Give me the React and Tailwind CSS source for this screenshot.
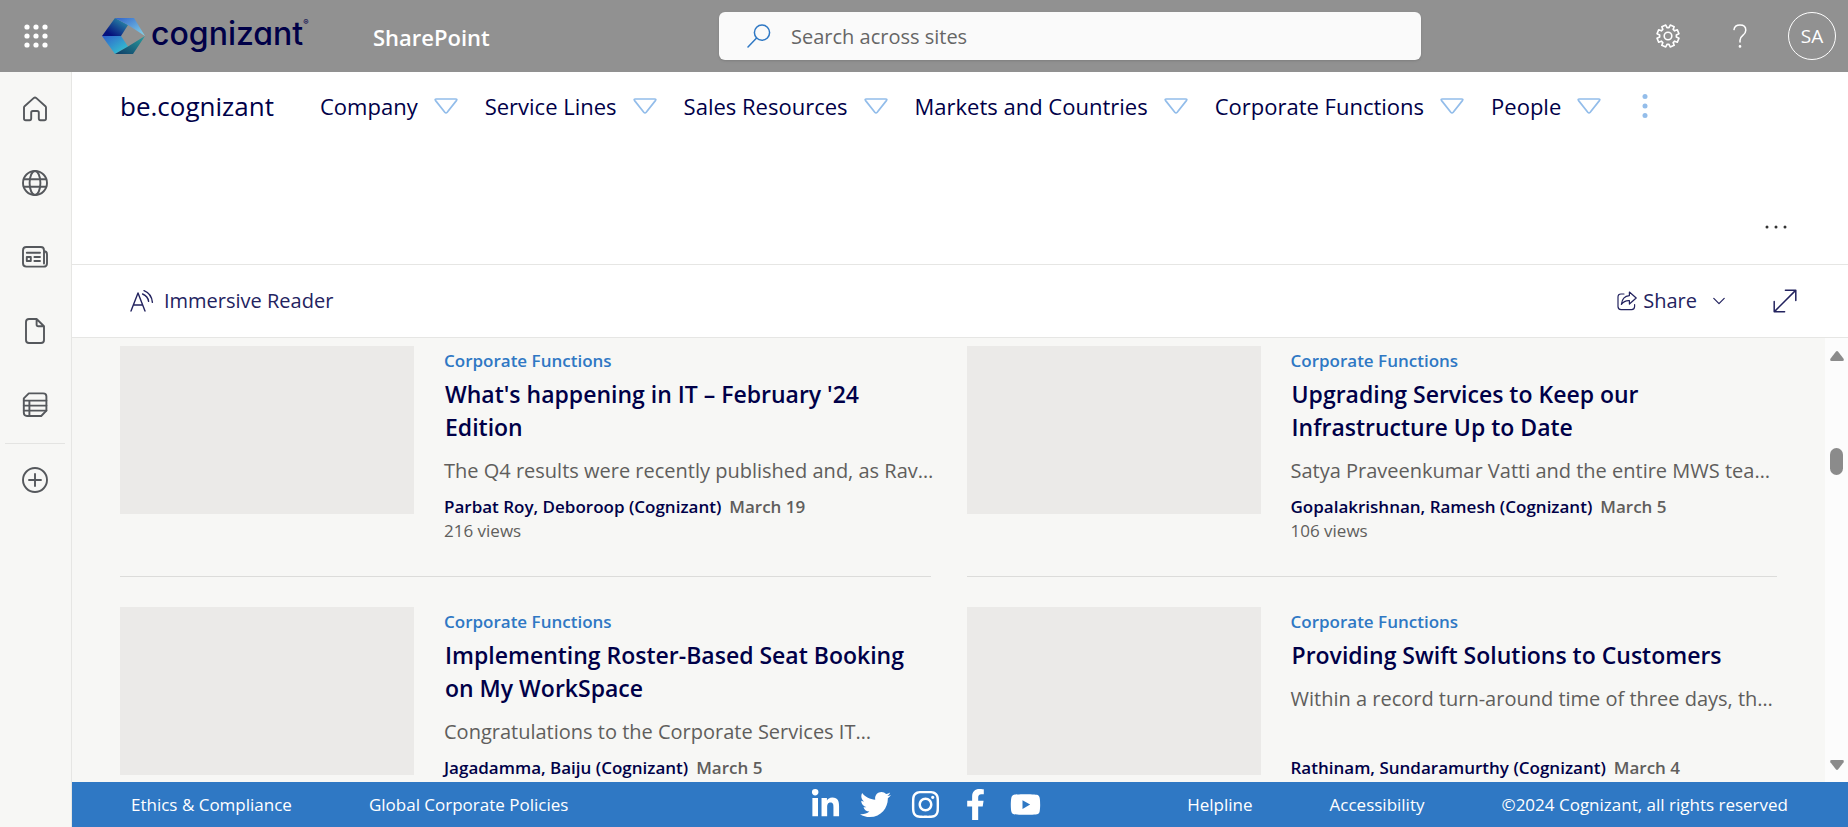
import React from "react";
import { FaFacebookF, FaInstagram, FaLinkedinIn, FaTwitter, FaYoutube } from "react-icons/fa";

const NAV = ["Company", "Service Lines", "Sales Resources", "Markets and Countries", "Corporate Functions", "People"];

const NEWS = [
  {
    title: "What's happening in IT – February '24 Edition",
    excerpt: "The Q4 results were recently published and, as Rav…",
    author: "Parbat Roy, Deboroop (Cognizant)",
    date: "March 19",
    views: "216 views",
  },
  {
    title: "Upgrading Services to Keep our Infrastructure Up to Date",
    excerpt: "Satya Praveenkumar Vatti and the entire MWS tea…",
    author: "Gopalakrishnan, Ramesh (Cognizant)",
    date: "March 5",
    views: "106 views",
  },
  {
    title: "Implementing Roster-Based Seat Booking on My WorkSpace",
    excerpt: "Congratulations to the Corporate Services IT…",
    author: "Jagadamma, Baiju (Cognizant)",
    date: "March 5",
  },
  {
    title: "Providing Swift Solutions to Customers",
    excerpt: "Within a record turn-around time of three days, th…",
    author: "Rathinam, Sundaramurthy (Cognizant)",
    date: "March 4",
  },
];

function Icon({ className, box = 26, width = 1.9, children }) {
  return (
    <svg
      viewBox={`0 0 ${box} ${box}`}
      className={className}
      fill="none"
      stroke="currentColor"
      strokeWidth={width}
      strokeLinecap="round"
      strokeLinejoin="round"
      aria-hidden="true"
    >
      {children}
    </svg>
  );
}

const RAIL = [
  {
    label: "Home",
    art: <path d="M2 11.6 Q2 10.8 2.6 10.2 L11.9 1.9 Q13 1 14.1 1.9 L23.4 10.2 Q24 10.8 24 11.6 V22.4 Q24 24.2 22.2 24.2 H18.4 Q16.8 24.2 16.8 22.6 V16.6 Q16.8 15 15.2 15 H10.8 Q9.2 15 9.2 16.6 V22.6 Q9.2 24.2 7.6 24.2 H3.8 Q2 24.2 2 22.4 Z" />,
  },
  {
    label: "My sites",
    art: (
      <>
        <circle cx="13" cy="13" r="12" />
        <ellipse cx="13" cy="13" rx="5.4" ry="12" />
        <path d="M1.8 9.2H24.2M1.8 16.8H24.2" />
      </>
    ),
  },
  {
    label: "My news",
    art: (
      <>
        <path d="M22 7.2V19.6M22 7.2Q25 7.2 25 10.4V19.4Q25 22.6 21.6 22.6H4.4Q1 22.6 1 19.2V6.4Q1 3 4.4 3H18.8Q22 3 22 6.4V7.2" />
        <path d="M4.8 8.8H18M12.4 13H18M12.4 17H18M4.8 13H8.8V17H4.8Z" />
      </>
    ),
  },
  {
    label: "My files",
    art: <path d="M14.6 1H7Q4 1 4 4V22Q4 25 7 25H19Q22 25 22 22V8.2L14.6 1V6.4Q14.6 8.2 16.4 8.2H22" />,
  },
  {
    label: "My lists",
    art: (
      <>
        <path d="M6.8 1.4H21.2Q24.4 1.4 24.4 4.6V18.6L19.2 24H5Q1.8 24 1.8 20.8V6.4Z" />
        <path d="M1.8 8.6H24.4M1.8 13.6H24.4M1.8 18.6H24.4M7.4 8.6V24" />
      </>
    ),
  },
];

function Hexagon() {
  return (
    <svg viewBox="0 0 43 36" className="h-9 w-[43px] shrink-0" aria-hidden="true">
      <defs>
        <linearGradient id="g1" x1="0" y1="1" x2="1" y2="0">
          <stop offset="0.2" stopColor="#05107c" />
          <stop offset="1" stopColor="#2f9fb0" />
        </linearGradient>
        <linearGradient id="g2" x1="0" y1="0" x2="1" y2="1">
          <stop offset="0" stopColor="#2f62c9" />
          <stop offset="1" stopColor="#86d6ea" />
        </linearGradient>
        <linearGradient id="g3" x1="0" y1="0" x2="1" y2="1">
          <stop offset="0" stopColor="#2f5fcb" />
          <stop offset="1" stopColor="#34cfd0" />
        </linearGradient>
        <linearGradient id="g4" x1="0" y1="1" x2="1" y2="0">
          <stop offset="0" stopColor="#0d3b66" />
          <stop offset="1" stopColor="#2b9f9f" />
        </linearGradient>
      </defs>
      <path d="M13 0L26 7L19 18H0Z" fill="url(#g1)" />
      <path d="M13 0H32L43 18L26 7Z" fill="url(#g2)" />
      <path d="M0 18H19L26 28.5L13 36Z" fill="url(#g3)" />
      <path d="M43 18L31 36H13L26 28.5Z" fill="url(#g4)" />
    </svg>
  );
}

const gearPath = (() => {
  const pts = [];
  for (let i = 0; i < 8; i++) {
    const a = ((i + 0.5) * Math.PI) / 4;
    [[-0.27, 8.4], [-0.19, 11.2], [0.19, 11.2], [0.27, 8.4]].forEach(([d, r]) => {
      pts.push(`${(12 + r * Math.sin(a + d)).toFixed(2)} ${(12 - r * Math.cos(a + d)).toFixed(2)}`);
    });
  }
  return `M${pts.join("L")}Z`;
})();

function Header() {
  return (
    <header className="flex h-[72px] shrink-0 items-center bg-[#919191] pr-3">
      <div className="flex w-[719px] shrink-0 items-center">
        <button aria-label="App launcher" className="flex w-[71px] justify-center text-white">
          <svg viewBox="0 0 24 24" className="size-6" fill="currentColor" aria-hidden="true">
            {[3, 12, 21].map((y) => [3, 12, 21].map((x) => <circle key={`${x}${y}`} cx={x} cy={y} r="2.6" />))}
          </svg>
        </button>
        <a href="#home" className="ml-[31px] flex w-[205px] items-center gap-1.5 text-[#000048]">
          <Hexagon />
          <span className="-mt-1 flex font-['Inter',sans-serif] text-[32px] leading-9 font-medium [font-feature-settings:'cv11']">
            cognizant<span className="text-[8px] leading-3">®</span>
          </span>
        </a>
        <a href="#sharepoint" className="ml-[66px] pt-0.5 text-[22px] leading-8 font-semibold text-white">
          SharePoint
        </a>
      </div>
      <label className="flex h-12 max-w-[702px] flex-1 items-center gap-5 rounded-md bg-[#fafafa] px-7 shadow">
        <Icon box={24} width={1.5} className="size-6 text-[#2f78c4]">
          <circle cx="15" cy="8.6" r="7.6" />
          <path d="M9.6 14L1 23" />
        </Icon>
        <input
          type="search"
          aria-label="Search across sites"
          placeholder="Search across sites"
          className="min-w-0 flex-1 bg-transparent pt-0.5 text-[20px] outline-none placeholder:text-[#666]"
        />
      </label>
      <div className="ml-auto flex items-center text-white">
        <button aria-label="Settings" className="px-6">
          <Icon box={24} width={1.6} className="size-6">
            <path d={gearPath} />
            <circle cx="12" cy="12" r="3.8" />
          </Icon>
        </button>
        <button aria-label="Help" className="px-6">
          <Icon box={24} width={1.5} className="size-6">
            <path d="M6 5.6Q6.6 1 12 1Q17.8 1 17.8 6.2Q17.8 9 14.8 11.4Q12 13.6 12 16.2V18" />
            <circle cx="12" cy="22.4" r=".6" fill="currentColor" />
          </Icon>
        </button>
        <button aria-label="Account" className="ml-3 size-12 rounded-full border border-white text-[19px]">
          SA
        </button>
      </div>
    </header>
  );
}

function Rail() {
  return (
    <nav aria-label="App bar" className="flex w-[72px] shrink-0 flex-col items-center border-r border-[#e6e6e4] bg-[#f7f7f5] pt-6 pr-px text-[#55585c]">
      <div className="flex flex-col gap-12">
        {RAIL.map((r) => (
          <a key={r.label} href="#rail" aria-label={r.label}>
            <Icon className="size-[26px]">{r.art}</Icon>
          </a>
        ))}
      </div>
      <div className="mt-[25px] mb-[23px] h-px w-[60px] bg-[#e4e4e2]" />
      <button aria-label="Create">
        <Icon className="size-[26px]">
          <circle cx="13" cy="13" r="12" />
          <path d="M13 7V19M7 13H19" />
        </Icon>
      </button>
    </nav>
  );
}

function SiteHeader() {
  return (
    <div className="flex h-[193px] shrink-0 flex-col justify-between border-b border-[#e6e6e4] bg-white px-12 pt-4 pb-[25px]">
      <nav className="flex items-center text-[#000048]">
        <a href="#site" className="w-[200px] text-[26px] leading-9">
          be.cognizant
        </a>
        <ul className="flex gap-[27px]">
          {NAV.map((n) => (
            <li key={n}>
              <button className="flex items-center gap-4 text-[22px] leading-9 whitespace-nowrap">
                {n}
                <svg viewBox="0 0 24 16" className="h-4 w-6 text-[#93bdea]" fill="none" stroke="currentColor" strokeWidth="1.7" strokeLinejoin="round" aria-hidden="true">
                  <path d="M2.4 1H21.6Q23.6 1 22.4 2.6L13.2 14.2Q12 15.6 10.8 14.2L1.6 2.6Q.4 1 2.4 1Z" />
                </svg>
              </button>
            </li>
          ))}
        </ul>
        <button aria-label="More links" className="ml-9 text-[#93bdea]">
          <svg viewBox="0 0 16 24" className="h-6 w-4" fill="currentColor" aria-hidden="true">
            <circle cx="8" cy="2.6" r="2.5" />
            <circle cx="8" cy="12" r="2.5" />
            <circle cx="8" cy="21.4" r="2.5" />
          </svg>
        </button>
      </nav>
      <button aria-label="More actions" className="self-end px-3 py-2.5 text-[#333]">
        <svg viewBox="0 0 24 4" className="h-1 w-6" fill="currentColor" aria-hidden="true">
          <circle cx="3" cy="2" r="1.5" />
          <circle cx="12" cy="2" r="1.5" />
          <circle cx="21" cy="2" r="1.5" />
        </svg>
      </button>
    </div>
  );
}

function Toolbar() {
  return (
    <div className="flex h-[73px] shrink-0 items-center border-b border-[#e6e6e4] bg-white pr-[51px] pl-[58px] text-[20px] text-[#23235f]">
      <button className="flex items-center gap-2.5">
        <Icon box={24} width={1.4} className="size-6">
          <path d="M1 22L8 4L15 22M3.4 16H12.6" />
          <path d="M14 1.6Q21.6 4.6 22.4 13.4M12.6 5Q18 7.4 18.6 12.4" />
        </Icon>
        Immersive Reader
      </button>
      <button className="ml-auto flex items-center">
        <Icon box={20} width={1.2} className="mr-1.5 size-5">
          <path d="M7 3H4Q1 3 1 6V15.6Q1 18.6 4 18.6H14.6Q17.6 18.6 17.6 15.6V13.6" />
          <path d="M12.4 1L19.2 7L12.4 13V9.6Q7.4 9.2 4.4 13.4Q5.2 5.2 12.4 4.6Z" />
        </Icon>
        Share
        <Icon box={12} width={1.2} className="ml-4 size-3">
          <path d="M.8 3.4L6 8.6L11.2 3.4" />
        </Icon>
      </button>
      <button aria-label="Expand" className="ml-12">
        <Icon box={24} width={1.5} className="size-6">
          <path d="M1.4 22.6L22.6 1.4M12.4 1.2H22.8V11.6M1.2 12.4V22.8H11.6" />
        </Icon>
      </button>
    </div>
  );
}

function Card({ item, divider }) {
  return (
    <article className={divider ? "flex gap-[30px] border-b border-[#dcdcda] pb-[33px]" : "flex gap-[30px] pb-[33px]"}>
      <div className="h-[168px] w-[294px] shrink-0 bg-[#ebeae8]" />
      <div className="min-w-0 flex-1">
        <div className="min-h-[149px]">
          <a href="#category" className="block text-[17px] leading-[30px] font-semibold text-[#2f78c4]">
            Corporate Functions
          </a>
          <h2 className="mt-0.5 pl-px text-[23px] leading-[33px] font-semibold text-[#000048]">{item.title}</h2>
          <p className="mt-3 text-[20px] leading-[30px] whitespace-nowrap text-[#605e5c]">{item.excerpt}</p>
        </div>
        <div className="flex gap-2 text-[17px] leading-6 font-semibold whitespace-nowrap">
          <a href="#author" className="text-[#000048]">
            {item.author}
          </a>
          <span className="text-[#605e5c]">{item.date}</span>
        </div>
        {item.views && <div className="text-[17px] leading-6 text-[#605e5c]">{item.views}</div>}
      </div>
    </article>
  );
}

function Scrollbar() {
  return (
    <div className="flex w-[23px] shrink-0 flex-col items-center bg-[#fcfcfc] pt-[13px] pb-3 text-[#8b8b8b]" aria-hidden="true">
      <svg viewBox="0 0 14 10" className="h-2.5 w-3.5" fill="currentColor">
        <path d="M5.8 .8Q7 -.6 8.2 .8L13.6 7.8Q14.4 10 12.4 10H1.6Q-.4 10 .4 7.8Z" />
      </svg>
      <div className="mt-[87px] h-[27px] w-[13px] rounded-full bg-[#8b8b8b]" />
      <svg viewBox="0 0 14 10" className="mt-auto h-2.5 w-3.5" fill="currentColor">
        <path d="M5.8 9.2Q7 10.6 8.2 9.2L13.6 2.2Q14.4 0 12.4 0H1.6Q-.4 0 .4 2.2Z" />
      </svg>
    </div>
  );
}

function Footer() {
  return (
    <footer className="flex h-[45px] shrink-0 items-center bg-[#2f78c4] pr-[60px] pl-[59px] text-[17px] whitespace-nowrap text-white">
      <div className="flex flex-[10] gap-[77px]">
        <a href="#ethics">Ethics &amp; Compliance</a>
        <a href="#policies">Global Corporate Policies</a>
      </div>
      <div className="flex items-center gap-[19px]">
        <a href="#linkedin" aria-label="LinkedIn"><FaLinkedinIn className="size-[31px]" /></a>
        <a href="#twitter" aria-label="Twitter"><FaTwitter className="size-[31px]" /></a>
        <a href="#instagram" aria-label="Instagram"><FaInstagram className="size-[31px]" /></a>
        <a href="#facebook" aria-label="Facebook"><FaFacebookF className="size-[31px]" /></a>
        <a href="#youtube" aria-label="YouTube"><FaYoutube className="size-[31px]" /></a>
      </div>
      <div className="flex flex-[11] justify-end gap-[77px]">
        <a href="#helpline">Helpline</a>
        <a href="#accessibility">Accessibility</a>
        <span>©2024 Cognizant, all rights reserved</span>
      </div>
    </footer>
  );
}

export default function App() {
  return (
    <div className="flex h-screen flex-col overflow-hidden bg-white font-['Open_Sans',sans-serif]">
      <Header />
      <div className="flex min-h-0 flex-1">
        <Rail />
        <div className="flex min-w-0 flex-1 flex-col">
          <SiteHeader />
          <Toolbar />
          <div className="flex min-h-0 flex-1 bg-[#f7f7f5]">
            <main className="grid min-w-0 flex-1 grid-cols-2 content-start gap-x-9 gap-y-[30px] overflow-hidden pt-2 pr-12 pl-12">
              {NEWS.map((item, i) => (
                <Card key={item.title} item={item} divider={i < 2} />
              ))}
            </main>
            <Scrollbar />
          </div>
          <Footer />
        </div>
      </div>
    </div>
  );
}
